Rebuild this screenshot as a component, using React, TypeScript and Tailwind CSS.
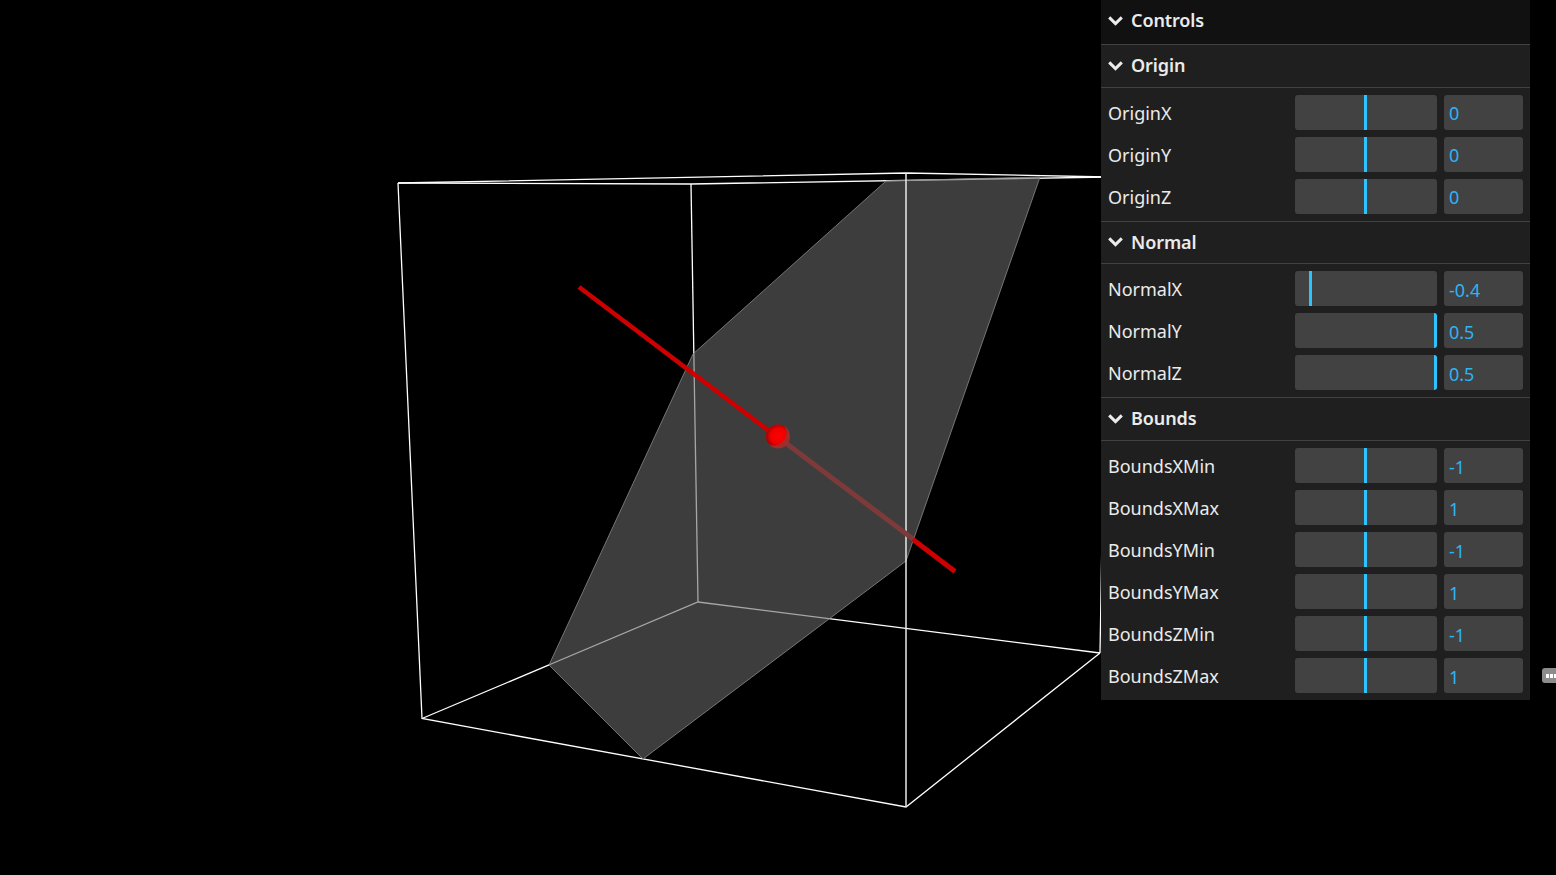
const font = "font-['Noto_Sans',sans-serif]";

type Row = { label: string; value: string; offset: number };
type Section = { title: string; rows: Row[]; shift: boolean; head: string };

const sections: Section[] = [
  {
    title: "Origin",
    shift: false,
    head: "h-[43px] pb-[1px]",
    rows: [
      { label: "OriginX", value: "0", offset: 69 },
      { label: "OriginY", value: "0", offset: 69 },
      { label: "OriginZ", value: "0", offset: 69 },
    ],
  },
  {
    title: "Normal",
    shift: true,
    head: "h-[42px] pb-[1px]",
    rows: [
      { label: "NormalX", value: "-0.4", offset: 14 },
      { label: "NormalY", value: "0.5", offset: 139 },
      { label: "NormalZ", value: "0.5", offset: 139 },
    ],
  },
  {
    title: "Bounds",
    shift: true,
    head: "h-[43px] pb-[1px]",
    rows: [
      { label: "BoundsXMin", value: "-1", offset: 69 },
      { label: "BoundsXMax", value: "1", offset: 69 },
      { label: "BoundsYMin", value: "-1", offset: 69 },
      { label: "BoundsYMax", value: "1", offset: 69 },
      { label: "BoundsZMin", value: "-1", offset: 69 },
      { label: "BoundsZMax", value: "1", offset: 69 },
    ],
  },
];

function Chevron() {
  return (
    <svg width="15" height="10" viewBox="0 0 15 10" className="shrink-0">
      <path d="M1.2 1.4 L7.5 7.6 L13.8 1.4" fill="none" stroke="#ebebeb" strokeWidth="3" />
    </svg>
  );
}

function Header({ title, className }: { title: string; className: string }) {
  return (
    <div className={`flex items-center gap-[8px] pl-[7px] border-b border-[#424242] text-[#ebebeb] font-semibold text-[18px] tracking-[-0.1px] ${className}`}>
      <Chevron />
      <span>{title}</span>
    </div>
  );
}

function ControlRow({ row, shift }: { row: Row; shift: boolean }) {
  return (
    <div className="flex items-center h-[35px] mb-[7px] last:mb-0 pl-[7px]">
      <span className="w-[187px] pt-[2px] shrink-0 text-[18px] text-[#ebebeb]">{row.label}</span>
      <div className="w-[142px] h-[35px] shrink-0 bg-[#424242] rounded-[3px] overflow-hidden">
        <div className="w-[3px] h-full bg-[#2cc3ff]" style={{ marginLeft: row.offset }} />
      </div>
      <div className={`ml-[7px] w-[79px] h-[35px] shrink-0 bg-[#424242] rounded-[3px] pl-[5px] flex items-center text-[18px] text-[#2cb4f6] ${shift ? "pt-[4px]" : "pt-[2px]"}`}>
        {row.value}
      </div>
    </div>
  );
}

export default function App() {
  const plane = "886,181 1040,177 906,561 643,759 549,665 693,354";
  return (
    <div className={`relative w-full h-[875px] bg-black overflow-hidden ${font}`}>
      <svg className="absolute inset-0" width="1556" height="875" viewBox="0 0 1556 875">
        <defs>
          <clipPath id="planeClip">
            <polygon points={plane} />
          </clipPath>
          <clipPath id="ballLit">
            <circle cx="774" cy="433" r="12.5" />
          </clipPath>
          <radialGradient id="ball" cx="0.52" cy="0.48" r="0.55">
            <stop offset="0" stopColor="#ff0000" />
            <stop offset="0.6" stopColor="#ee0000" />
            <stop offset="1" stopColor="#960000" />
          </radialGradient>
        </defs>
        <g stroke="#ffffff" strokeWidth="1.3" fill="none">
          <path d="M398 183 L906 173 L1108 177" />
          <path d="M398 183 L691 184 L1108 177" />
          <path d="M398 183 L422 718.5 L906 807 L1100 653" />
          <path d="M422 718.5 L698 602 L1100 653" />
          <path d="M691 184 L698 602" />
          <path d="M1108 177 L1100 653" />
        </g>
        <polygon points={plane} fill="#3d3d3d" stroke="#8a8a8a" strokeWidth="0.8" />
        <g clipPath="url(#planeClip)" stroke="#a6a6a6" strokeWidth="1.3" fill="none">
          <path d="M422 718.5 L698 602 L1100 653" />
          <path d="M691 184 L698 602" />
          <path d="M691 184 L1108 177" />
        </g>
        <path d="M906 173 L906 807" stroke="#e8e8e8" strokeWidth="1.5" fill="none" />
        <path d="M783 441 L913 539" stroke="#7d3a3a" strokeWidth="5" fill="none" />
        <path d="M579 287 L777 437" stroke="#cc0000" strokeWidth="4.6" fill="none" />
        <path d="M913 539.5 L955 571.5" stroke="#cc0000" strokeWidth="5" fill="none" />
        <circle cx="778" cy="436.5" r="12" fill="#a02c2c" />
        <circle cx="778" cy="436.5" r="12" fill="url(#ball)" clipPath="url(#ballLit)" />
      </svg>

      <div className="relative flex justify-end pr-[26px]">
        <div className="w-[429px] bg-[#1f1f1f] pb-[7px]">
          <Header title="Controls" className="h-[45px] pb-[3px] bg-[#111111]" />
          {sections.map((s, i) => (
            <div key={s.title} className={i < sections.length - 1 ? "border-b border-[#424242]" : ""}>
              <Header title={s.title} className={s.head} />
              <div className={i < sections.length - 1 ? "pt-[7px] pb-[7px]" : "pt-[7px]"}>
                {s.rows.map((r) => (
                  <ControlRow key={r.label} row={r} shift={s.shift} />
                ))}
              </div>
            </div>
          ))}
        </div>
      </div>

      <div className="absolute left-[1542px] top-[668px] w-[20px] h-[15px] rounded-[3px] bg-[#8c8c8c] flex items-center gap-[1px] pl-[4px]">
        <span className="w-[3px] h-[4px] bg-white" />
        <span className="w-[3px] h-[4px] bg-white" />
        <span className="w-[3px] h-[4px] bg-white" />
      </div>
    </div>
  );
}
